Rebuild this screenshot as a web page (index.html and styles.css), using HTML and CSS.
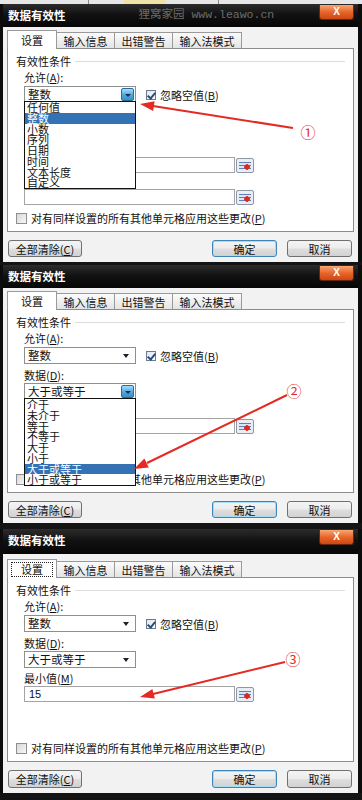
FILE: index.html
```html
<!DOCTYPE html>
<html lang="zh-CN">
<head>
    <meta charset="UTF-8">
    <meta name="viewport" content="width=device-width, initial-scale=1.0">
    <title>数据有效性</title>
    <link rel="stylesheet" href="styles.css">
</head>
<body>
<div class="page">
    <div class="sheet"></div>

    <!-- 第一步: 允许 -->
    <div class="dialog">
        <div class="titlebar">
            <span class="title">数据有效性</span>
            <span class="watermark">狸窝家园 www.leawo.cn</span>
            <span class="close">X</span>
        </div>
        <div class="body">
            <div class="tabs">
                <div class="tab active w1">设置</div>
                <div class="tab w2">输入信息</div>
                <div class="tab w2">出错警告</div>
                <div class="tab w3">输入法模式</div>
            </div>
            <div class="panel">
                <div class="legend"><span>有效性条件</span></div>
                <div class="label">允许(<u>A</u>):</div>
                <div class="row">
                    <div class="combo">
                        <span>整数</span>
                        <span class="drop open"></span>
                        <div class="list">
                            <div class="item">任何值</div>
                            <div class="item sel">整数</div>
                            <div class="item">小数</div>
                            <div class="item">序列</div>
                            <div class="item">日期</div>
                            <div class="item">时间</div>
                            <div class="item">文本长度</div>
                            <div class="item">自定义</div>
                        </div>
                    </div>
                    <span class="check on"></span>
                    <span class="check-label">忽略空值(<u>B</u>)</span>
                </div>
                <div class="label l2">数据(<u>D</u>):</div>
                <div class="combo c2"><span>介于</span><span class="drop"></span></div>
                <div class="label l3">最小值(<u>M</u>)</div>
                <div class="field">
                    <div class="input"></div>
                    <span class="ref"></span>
                </div>
                <div class="label l4">最大值(<u>X</u>)</div>
                <div class="field f2">
                    <div class="input"></div>
                    <span class="ref"></span>
                </div>
                <div class="apply">
                    <span class="check"></span>
                    <span>对有同样设置的所有其他单元格应用这些更改(<u>P</u>)</span>
                </div>
            </div>
            <div class="buttons">
                <div class="btn wide">全部清除(<u>C</u>)</div>
                <div class="btn ok">确定</div>
                <div class="btn">取消</div>
            </div>
        </div>
    </div>

    <!-- 第二步: 数据 -->
    <div class="dialog">
        <div class="titlebar">
            <span class="title">数据有效性</span>
            <span class="close">X</span>
        </div>
        <div class="body">
            <div class="tabs">
                <div class="tab active w1">设置</div>
                <div class="tab w2">输入信息</div>
                <div class="tab w2">出错警告</div>
                <div class="tab w3">输入法模式</div>
            </div>
            <div class="panel">
                <div class="legend"><span>有效性条件</span></div>
                <div class="label">允许(<u>A</u>):</div>
                <div class="row">
                    <div class="combo"><span>整数</span><span class="drop"></span></div>
                    <span class="check on"></span>
                    <span class="check-label">忽略空值(<u>B</u>)</span>
                </div>
                <div class="label l2">数据(<u>D</u>):</div>
                <div class="combo c2">
                    <span>大于或等于</span>
                    <span class="drop open"></span>
                    <div class="list">
                        <div class="item">介于</div>
                        <div class="item">未介于</div>
                        <div class="item">等于</div>
                        <div class="item">不等于</div>
                        <div class="item">大于</div>
                        <div class="item">小于</div>
                        <div class="item sel">大于或等于</div>
                        <div class="item">小于或等于</div>
                    </div>
                </div>
                <div class="label l3">最小值(<u>M</u>)</div>
                <div class="field">
                    <div class="input"></div>
                    <span class="ref"></span>
                </div>
                <div class="apply">
                    <span class="check"></span>
                    <span>对有同样设置的所有其他单元格应用这些更改(<u>P</u>)</span>
                </div>
            </div>
            <div class="buttons">
                <div class="btn wide">全部清除(<u>C</u>)</div>
                <div class="btn ok">确定</div>
                <div class="btn">取消</div>
            </div>
        </div>
    </div>

    <!-- 第三步: 最小值 -->
    <div class="dialog last">
        <div class="titlebar">
            <span class="title">数据有效性</span>
            <span class="close">X</span>
        </div>
        <div class="body">
            <div class="tabs">
                <div class="tab active w1"><span class="focus">设置</span></div>
                <div class="tab w2">输入信息</div>
                <div class="tab w2">出错警告</div>
                <div class="tab w3">输入法模式</div>
            </div>
            <div class="panel">
                <div class="legend"><span>有效性条件</span></div>
                <div class="label">允许(<u>A</u>):</div>
                <div class="row">
                    <div class="combo"><span>整数</span><span class="drop"></span></div>
                    <span class="check on"></span>
                    <span class="check-label">忽略空值(<u>B</u>)</span>
                </div>
                <div class="label l2">数据(<u>D</u>):</div>
                <div class="combo c2"><span>大于或等于</span><span class="drop"></span></div>
                <div class="label l3">最小值(<u>M</u>)</div>
                <div class="field">
                    <div class="input">15</div>
                    <span class="ref"></span>
                </div>
                <div class="apply">
                    <span class="check"></span>
                    <span>对有同样设置的所有其他单元格应用这些更改(<u>P</u>)</span>
                </div>
            </div>
            <div class="buttons">
                <div class="btn wide">全部清除(<u>C</u>)</div>
                <div class="btn ok">确定</div>
                <div class="btn">取消</div>
            </div>
        </div>
    </div>

    <!-- 红色箭头标注 -->
    <svg class="marks" width="362" height="800" viewBox="0 0 362 800">
        <g fill="#e42a22" stroke="#e42a22">
            <line x1="293" y1="128" x2="153" y2="106" stroke-width="2"/>
            <polygon points="140,104 154.6,101.3 153.1,111.1" stroke="none"/>
            <line x1="287" y1="395" x2="147" y2="463" stroke-width="2"/>
            <polygon points="134,469 148.8,467.4 144.4,458.4" stroke="none"/>
            <line x1="285" y1="662" x2="153" y2="694" stroke-width="2"/>
            <polygon points="140,697 154.8,698.6 152.4,688.9" stroke="none"/>
        </g>
        <g class="num">
            <text x="308" y="131">①</text>
            <text x="294" y="390">②</text>
            <text x="293" y="658">③</text>
        </g>
    </svg>
</div>
</body>
</html>
```

FILE: styles.css
```css
body {
    margin: 0;
    background-color: #141414;
    font-family: "Noto Sans CJK SC", "Noto Sans", sans-serif;
    font-size: 11px;
    color: #111;
    overflow: hidden;
}
.page {
    position: relative;
    width: 362px;
    height: 800px;
}
.sheet {
    height: 4px;
    background: linear-gradient(90deg, #e6e6e6 0 88px, #888 88px 89px, #e6e6e6 89px 124px, #efe3a8 124px 166px, #e6e6e6 166px 218px, #888 218px 219px, #e6e6e6 219px);
}
.dialog {
    border-left: 3px solid #0c0c0c;
    border-right: 4px solid #0c0c0c;
    background-color: #f2f2f2;
    margin-bottom: 3px;
}
.dialog + .dialog.last {
    margin-top: 6px;
}
.titlebar {
    height: 23px;
    display: flex;
    align-items: flex-start;
    padding-left: 5px;
    background: linear-gradient(#2c2c2c, #121212 45%, #060606);
}
.last .titlebar {
    height: 25px;
}
.title {
    color: #fff;
    font-weight: bold;
    font-size: 11.5px;
    line-height: 22px;
}
.watermark {
    margin-left: 73px;
    color: #6c6c6c;
    font-family: "Liberation Mono", "Noto Sans CJK SC", monospace;
    font-size: 11.5px;
    line-height: 22px;
}
.close {
    margin-left: auto;
    margin-right: 4px;
    margin-top: 1px;
    width: 33px;
    height: 14px;
    border: 1px solid #5e2a12;
    border-top: none;
    border-radius: 0 0 3px 3px;
    background: linear-gradient(#f6a774, #e8662a 50%, #cf4612);
    color: #fff;
    font-family: "Liberation Sans", sans-serif;
    font-weight: bold;
    font-size: 10px;
    line-height: 14px;
    text-align: center;
}
.body {
    padding: 3px 4px 5px 4px;
}
.last .body {
    padding-top: 5px;
}
.tabs {
    display: flex;
    align-items: flex-end;
    height: 18px;
    padding-left: 1px;
}
.tab {
    height: 16px;
    box-sizing: border-box;
    border: 1px solid #9a9a9a;
    border-bottom: none;
    margin-left: -1px;
    background: linear-gradient(#fbfbfb, #e4e4e4);
    display: flex;
    justify-content: center;
    align-items: center;
    font-size: 11px;
}
.tab.active {
    height: 19px;
    margin-bottom: -1px;
    background: #fff;
    position: relative;
    z-index: 1;
}
.w1 { width: 50px; }
.w2 { width: 59px; }
.w3 { width: 70px; }
.focus {
    border: 1px dotted #222;
    padding: 0 9px;
    line-height: 13px;
}
.panel {
    height: 184px;
    box-sizing: border-box;
    border: 1px solid #8c8c8c;
    background-color: #fff;
    display: flex;
    flex-direction: column;
    padding: 5px 0 6px 0;
}
.last .panel {
    height: 185px;
}
.legend {
    display: flex;
    align-items: center;
    height: 14px;
    margin: 0 8px;
    gap: 4px;
}
.legend::after {
    content: "";
    flex: 1;
    border-top: 1px solid #dcdcdc;
}
.label {
    margin: 2px 0 0 16px;
    height: 14px;
    line-height: 14px;
}
.label.l2 { margin-top: 4px; }
.label.l3 { margin-top: 3px; }
.label.l4 { margin-top: 2px; }
u {
    text-decoration-thickness: 1px;
}
.row {
    display: flex;
    align-items: center;
    margin: 2px 0 0 16px;
}
.combo {
    position: relative;
    width: 112px;
    height: 17px;
    box-sizing: border-box;
    border: 1px solid #8f8f8f;
    background: #fff;
    padding-left: 3px;
    font-size: 11.5px;
    line-height: 15px;
}
.combo.c2 {
    margin: 1px 0 0 16px;
}
.drop {
    position: absolute;
    right: 6px;
    top: 6px;
    border-left: 3px solid transparent;
    border-right: 3px solid transparent;
    border-top: 4px solid #1a2230;
}
.drop.open {
    right: 1px;
    top: 1px;
    width: 13px;
    height: 13px;
    box-sizing: border-box;
    border: 1px solid #2c6a9c;
    border-radius: 2px;
    background: linear-gradient(#a8dcf8, #4fa6de 55%, #3b8fcb);
}
.drop.open::after {
    content: "";
    position: absolute;
    left: 3px;
    top: 5px;
    border-left: 3px solid transparent;
    border-right: 3px solid transparent;
    border-top: 3px solid #16324e;
}
.list {
    position: absolute;
    top: 100%;
    left: -1px;
    width: 112px;
    box-sizing: border-box;
    border: 1px solid #111;
    background: #fff;
    z-index: 2;
    margin-top: -1px;
}
.item {
    height: 10.75px;
    line-height: 10.75px;
    padding-left: 2px;
    font-size: 11px;
    white-space: nowrap;
}
.item.sel {
    background-color: #3373b5;
    color: #fff;
}
.check {
    width: 10px;
    height: 10px;
    box-sizing: border-box;
    border: 1px solid #8e8f8f;
    background: linear-gradient(135deg, #d8d8d8, #f8f8f8);
    display: inline-block;
    flex: none;
}
.row .check {
    margin-left: 10px;
    border-color: #6b7c90;
    background: linear-gradient(135deg, #dfe6ee, #ffffff);
    position: relative;
}
.check.on::after {
    content: "";
    position: absolute;
    left: 2px;
    top: 0;
    width: 3px;
    height: 6px;
    border-right: 2px solid #2a4d7a;
    border-bottom: 2px solid #2a4d7a;
    transform: rotate(40deg);
}
.check-label {
    margin-left: 4px;
    font-size: 11px;
}
.field {
    display: flex;
    align-items: center;
    margin: 1px 0 0 16px;
    gap: 1px;
}
.field.f2 {
    margin-top: 0;
}
.input {
    width: 211px;
    height: 16px;
    box-sizing: border-box;
    border: 1px solid #a4a4a4;
    background: #fff;
    padding-left: 4px;
    font-family: "Liberation Sans", sans-serif;
    font-size: 11px;
    line-height: 14px;
}
.ref {
    width: 18px;
    height: 15px;
    box-sizing: border-box;
    border: 1px solid #8d98a6;
    border-radius: 2px;
    background:
        radial-gradient(circle at 10px 8px, #e0261e 0 2.5px, transparent 3px),
        repeating-linear-gradient(#5c7fb6 0 1px, #dbe6f2 1px 3px);
    background-size: 100% 100%, 12px 7px;
    background-position: 0 0, 2px 3px;
    background-repeat: no-repeat;
    background-color: #e9eef4;
}
.apply {
    margin: auto 0 0 8px;
    display: flex;
    align-items: center;
    gap: 4px;
    height: 14px;
}
.apply .check {
    width: 11px;
    height: 11px;
}
.buttons {
    display: flex;
    margin-top: 8px;
    padding: 0 2px 0 1px;
}
.btn {
    width: 65px;
    height: 17px;
    box-sizing: border-box;
    border: 1px solid #707070;
    border-radius: 3px;
    background: linear-gradient(#f4f4f4, #ececec 48%, #dedede 52%, #d2d2d2);
    display: flex;
    justify-content: center;
    align-items: center;
    font-size: 11px;
    margin-left: 10px;
}
.last .btn {
    height: 18px;
}
.btn.wide {
    width: 74px;
    margin-left: 0;
}
.btn.ok {
    margin-left: auto;
    border-color: #3d84b8;
    box-shadow: inset 0 0 0 1px #a6dcf4;
}
.marks {
    position: absolute;
    left: 0;
    top: 0;
    pointer-events: none;
    z-index: 5;
}
.num text {
    fill: #e42a22;
    font-family: "Noto Sans CJK SC", sans-serif;
    font-size: 15px;
    text-anchor: middle;
    dominant-baseline: central;
}
```
